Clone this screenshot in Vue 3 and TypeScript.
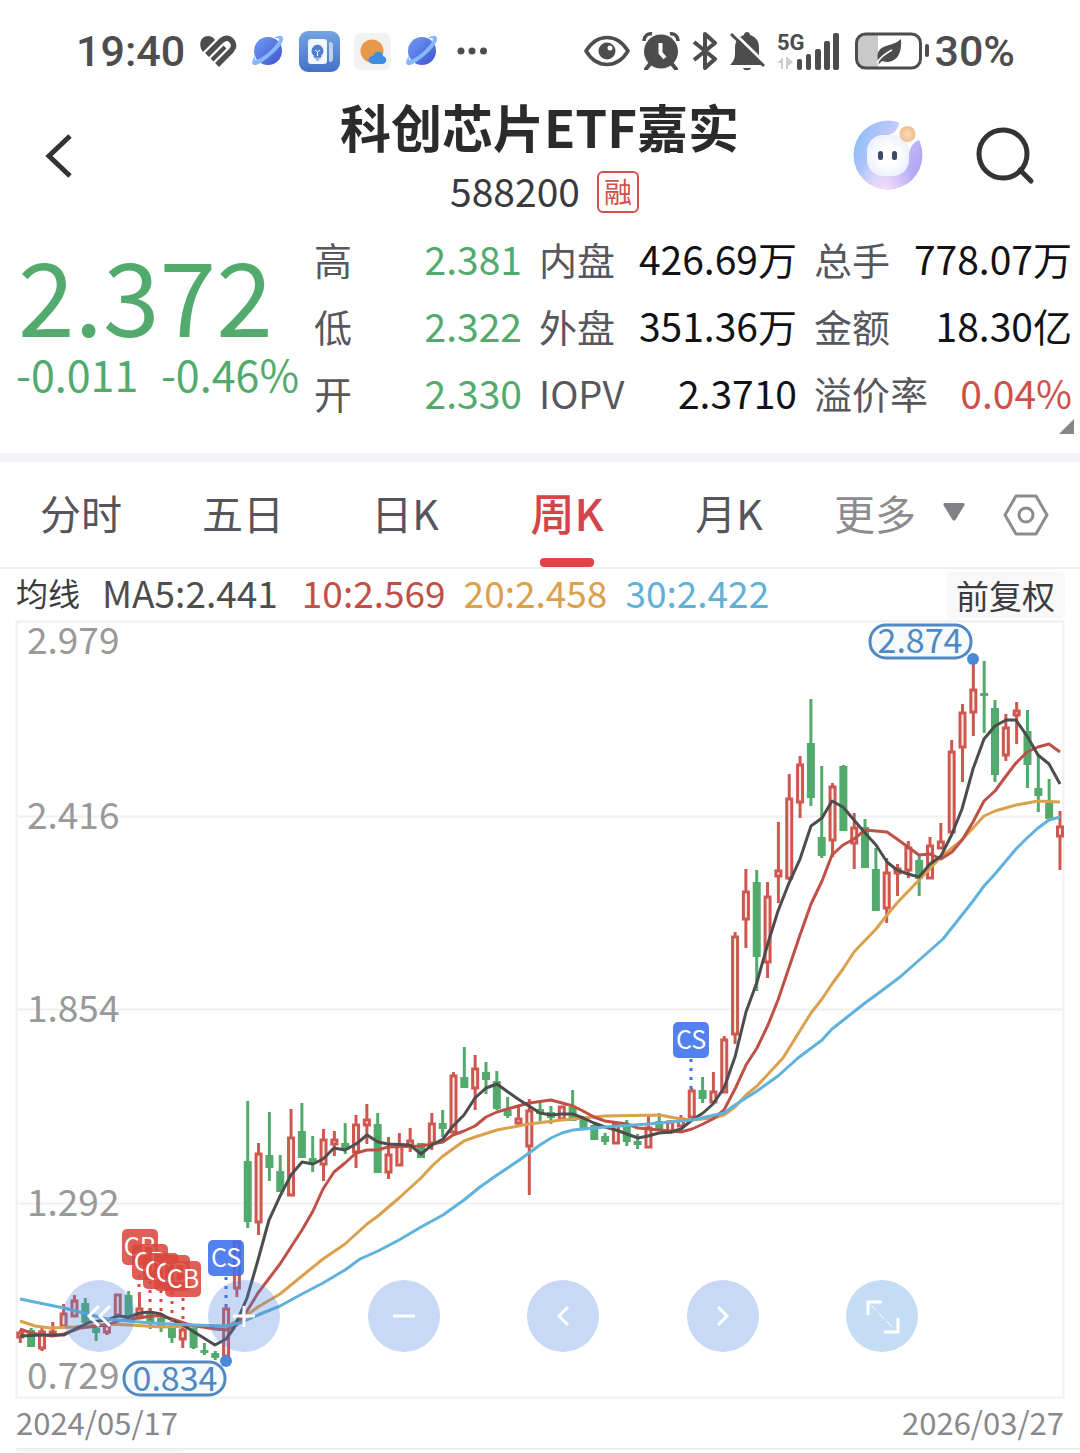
<script setup lang="ts">
type Candle = [kind: 'r' | 'g', high: number, top: number, bottom: number, low: number]

const rows = [
  [
    { label: '高', value: '2.381', tone: 'down' },
    { label: '低', value: '2.322', tone: 'down' },
    { label: '开', value: '2.330', tone: 'down' },
  ],
  [
    { label: '内盘', value: '426.69万', tone: '' },
    { label: '外盘', value: '351.36万', tone: '' },
    { label: 'IOPV', value: '2.3710', tone: '' },
  ],
  [
    { label: '总手', value: '778.07万', tone: '' },
    { label: '金额', value: '18.30亿', tone: '' },
    { label: '溢价率', value: '0.04%', tone: 'up' },
  ],
]

const tabs = ['分时', '五日', '日K', '周K', '月K']
const activeTab = '周K'

const averages = [
  { text: 'MA5:2.441', color: '#4d4d4d' },
  { text: '10:2.569', color: '#bf5048' },
  { text: '20:2.458', color: '#dba04c' },
  { text: '30:2.422', color: '#62b0d6' },
]

const axis = [
  { y: 654, text: '2.979' },
  { y: 829, text: '2.416' },
  { y: 1022, text: '1.854' },
  { y: 1216, text: '1.292' },
  { y: 1389, text: '0.729' },
]

const candles: Candle[] = [
  ['r', 1330, 1332, 1338, 1343], ['g', 1328, 1330, 1347, 1347], ['r', 1328, 1331, 1349, 1351],
  ['r', 1322, 1331, 1336, 1336], ['r', 1304, 1313, 1327, 1327], ['r', 1295, 1300, 1317, 1317],
  ['g', 1298, 1303, 1323, 1323], ['g', 1325, 1328, 1333, 1341], ['r', 1320, 1325, 1333, 1335],
  ['r', 1294, 1294, 1316, 1316], ['g', 1291, 1295, 1316, 1316], ['r', 1292, 1308, 1317, 1317],
  ['g', 1308, 1313, 1323, 1329], ['g', 1315, 1318, 1328, 1332], ['g', 1325, 1327, 1338, 1343],
  ['r', 1324, 1329, 1340, 1348], ['g', 1327, 1328, 1348, 1349], ['g', 1343, 1350, 1353, 1355],
  ['g', 1351, 1353, 1358, 1360], ['r', 1306, 1308, 1357, 1360], ['r', 1241, 1241, 1289, 1297],
  ['g', 1101, 1161, 1222, 1228], ['r', 1143, 1153, 1223, 1235], ['g', 1112, 1155, 1168, 1181],
  ['g', 1155, 1171, 1192, 1192], ['r', 1109, 1137, 1196, 1196], ['g', 1103, 1131, 1158, 1158],
  ['g', 1136, 1158, 1164, 1172], ['r', 1129, 1139, 1165, 1181], ['r', 1131, 1139, 1145, 1156],
  ['g', 1123, 1143, 1150, 1154], ['r', 1115, 1124, 1153, 1168], ['r', 1104, 1119, 1126, 1144],
  ['g', 1113, 1124, 1173, 1173], ['r', 1137, 1154, 1173, 1179], ['r', 1133, 1145, 1166, 1166],
  ['r', 1128, 1140, 1147, 1152], ['g', 1143, 1143, 1158, 1158], ['r', 1113, 1123, 1144, 1150],
  ['g', 1110, 1123, 1129, 1137], ['r', 1072, 1075, 1133, 1133], ['g', 1047, 1077, 1088, 1088],
  ['r', 1055, 1068, 1089, 1110], ['g', 1062, 1072, 1080, 1094], ['g', 1071, 1081, 1109, 1110],
  ['g', 1097, 1110, 1116, 1118], ['r', 1107, 1118, 1124, 1126], ['r', 1099, 1110, 1147, 1195],
  ['g', 1103, 1109, 1114, 1121], ['g', 1106, 1112, 1118, 1124], ['r', 1106, 1106, 1120, 1121],
  ['g', 1090, 1107, 1121, 1121], ['g', 1116, 1118, 1128, 1128], ['g', 1124, 1125, 1140, 1140],
  ['g', 1133, 1136, 1142, 1145], ['r', 1123, 1123, 1144, 1144], ['g', 1120, 1125, 1142, 1146],
  ['g', 1134, 1141, 1145, 1149], ['r', 1115, 1127, 1148, 1148], ['g', 1113, 1121, 1129, 1130],
  ['r', 1120, 1121, 1133, 1134], ['r', 1115, 1118, 1127, 1127], ['r', 1088, 1090, 1118, 1118],
  ['g', 1077, 1090, 1099, 1103], ['r', 1072, 1091, 1103, 1103], ['r', 1036, 1039, 1093, 1093],
  ['r', 932, 936, 1035, 1044], ['r', 869, 891, 920, 948], ['g', 870, 882, 957, 991],
  ['r', 882, 896, 963, 978], ['r', 822, 870, 877, 903], ['r', 774, 798, 879, 880],
  ['r', 756, 764, 803, 818], ['g', 699, 743, 798, 806], ['g', 766, 837, 856, 858],
  ['r', 783, 786, 841, 857], ['g', 765, 766, 831, 831], ['r', 813, 827, 844, 869],
  ['g', 819, 827, 868, 868], ['g', 848, 869, 911, 911], ['r', 858, 872, 909, 923],
  ['r', 864, 868, 874, 896], ['r', 841, 847, 871, 878], ['g', 855, 860, 879, 896],
  ['r', 837, 845, 879, 879], ['r', 823, 841, 849, 849], ['r', 740, 751, 833, 833],
  ['r', 704, 712, 748, 782], ['r', 660, 689, 713, 736], ['g', 661, 693, 696, 733],
  ['g', 700, 708, 775, 782], ['r', 714, 727, 756, 761], ['r', 702, 710, 716, 744],
  ['g', 710, 731, 765, 788], ['g', 754, 788, 796, 812], ['g', 779, 803, 819, 819],
  ['r', 811, 826, 837, 870],
]

const firstX = 20.3
const stepX = 10.83
const bars = candles.map(([kind, high, top, bottom, low], i) => ({
  key: i,
  x: firstX + i * stepX,
  color: kind === 'r' ? '#ce5750' : '#52ab6c',
  hollow: kind === 'r',
  high,
  top,
  bottom,
  low,
}))

const lines = [
  {
    color: '#dba04c',
    points:
      '20,1321 35,1326 50,1328 75,1327 107,1324 130,1325 161,1327 193,1326 226,1327 247,1315 258,1307 280,1294 302,1276 323,1259 345,1244 367,1224 378,1216 399,1198 421,1178 432,1166 443,1156 464,1141 475,1137 497,1130 529,1124 562,1120 605,1116 660,1115 670,1117 681,1119 692,1120 713,1118 724,1115 735,1107 746,1095 757,1086 783,1058 811,1013 822,999 832,984 843,969 854,952 876,929 887,915 897,903 919,880 941,857 962,840 973,828 984,816 995,811 1016,805 1027,803 1038,801 1060,802',
  },
  {
    color: '#bf5048',
    points:
      '20,1329 31,1333 42,1335 53,1336 64,1334 80,1328 107,1325 118,1321 129,1319 140,1318 150,1316 161,1316 172,1319 190,1325 215,1329 226,1330 237,1325 247,1311 258,1293 280,1264 302,1230 313,1211 323,1189 334,1172 345,1163 356,1153 367,1150 378,1150 388,1147 421,1146 443,1142 453,1135 464,1131 475,1126 486,1117 497,1112 518,1106 529,1103 551,1100 573,1106 583,1111 594,1117 605,1121 627,1124 638,1128 659,1130 681,1132 692,1129 703,1124 713,1119 724,1110 735,1089 746,1065 757,1048 768,1025 778,1000 800,935 811,904 822,881 832,855 843,845 854,839 865,830 887,832 897,839 908,847 919,855 930,854 941,859 952,852 962,840 973,822 984,801 995,791 1006,776 1016,763 1027,752 1038,747 1049,744 1060,752',
  },
  {
    color: '#4d4d4d',
    points:
      '20,1336 42,1335 64,1335 75,1329 90,1322 107,1320 118,1316 129,1317 140,1313 150,1312 161,1314 172,1320 183,1325 215,1345 226,1339 234,1328 247,1298 258,1260 269,1220 280,1196 291,1175 302,1162 313,1164 323,1159 334,1148 345,1150 356,1144 367,1135 378,1142 388,1144 410,1145 421,1154 432,1145 443,1139 453,1126 464,1115 475,1098 486,1088 497,1084 508,1092 518,1099 529,1106 540,1113 551,1115 562,1114 573,1114 583,1118 594,1123 605,1127 616,1130 627,1134 638,1138 648,1136 659,1133 670,1132 681,1129 692,1120 703,1113 713,1104 724,1088 735,1057 746,1012 757,982 768,943 778,911 789,883 800,859 811,826 822,818 832,801 843,807 854,820 865,833 876,845 887,862 897,870 908,874 919,877 930,864 941,856 952,834 962,809 973,769 984,739 995,726 1006,720 1016,720 1027,736 1038,755 1049,764 1060,784',
  },
  {
    color: '#5fb2da',
    points:
      '20,1299 64,1308 107,1319 150,1323 193,1325 226,1326 240,1323 258,1315 280,1306 302,1294 323,1283 345,1270 360,1259 378,1251 399,1240 421,1227 443,1215 464,1200 480,1187 497,1175 518,1161 529,1153 540,1145 551,1138 562,1133 573,1130 605,1127 648,1124 692,1120 724,1113 735,1105 746,1098 757,1091 778,1076 798,1058 822,1040 832,1029 865,1003 876,995 900,977 943,939 962,915 973,901 984,886 995,874 1016,849 1027,838 1038,828 1049,820 1060,817',
  },
]

const markers = [
  { text: 'CB', x: 122, y: 1229, to: 1292, lineX: 139, color: '#db483e' },
  { text: 'CB', x: 132, y: 1244, to: 1322, lineX: 150, color: '#db483e' },
  { text: 'CB', x: 143, y: 1253, to: 1316, lineX: 161, color: '#db483e' },
  { text: 'CB', x: 154, y: 1255, to: 1322, lineX: 172, color: '#db483e' },
  { text: 'CB', x: 165, y: 1261, to: 1324, lineX: 183, color: '#db483e' },
  { text: 'CS', x: 208, y: 1240, to: 1306, lineX: 226, color: '#3b70ee' },
  { text: 'CS', x: 673, y: 1022, to: 1090, lineX: 691, color: '#3b70ee' },
]

const controls = [
  { name: '最早', d: 'M36 26 26 36l10 10M47 26 37 36l10 10' },
  { name: '放大', d: 'M25 36h22M36 26v21' },
  { name: '缩小', d: 'M25 36h22' },
  { name: '向左', d: 'M41 27l-9 9 9 9' },
  { name: '向右', d: 'M31 27l9 9-9 9' },
  { name: '全屏', d: 'M22 35V22h14M52 38v14H38' },
]
</script>

<template>
  <main class="app">
    <div class="status">
      <div class="status-left">
        <span class="clock">19:40</span>
        <svg width="38" height="32" viewBox="0 0 38 32" aria-hidden="true">
          <g fill="none" stroke="#4d4d4d" stroke-width="5.500">
            <path d="M8 20 20 8C24 3 29 2 32 5s4 7 0 11L18 30" />
            <path d="M13 25 26 12" stroke-width="4" />
          </g>
          <path d="M4 17C-1 11 1 1 9 1c3 0 5 1 7 4z" fill="#4d4d4d" />
        </svg>
        <svg width="34" height="34" viewBox="0 0 34 34" aria-hidden="true">
          <defs>
            <linearGradient id="planet" x1="0" y1="0" x2="1" y2="1">
              <stop offset="0" stop-color="#6f9ef5" /><stop offset="1" stop-color="#4052d0" />
            </linearGradient>
          </defs>
          <circle cx="17" cy="17" r="14" fill="url(#planet)" />
          <path d="M23 4c5-3 9-3 9 1 0 5-7 12-13 17S6 32 3 31c-3-1-2-5 1-9 0 2 0 4 1 4 4-1 10-5 15-10s8-9 8-11c0-1-2-1-5-1z" fill="#86b8fa" />
        </svg>
        <svg width="41" height="41" viewBox="0 0 41 41" aria-hidden="true">
          <defs>
            <linearGradient id="tile" x1="0" y1="0" x2="0" y2="1">
              <stop offset="0" stop-color="#74a4e2" /><stop offset="1" stop-color="#4571c6" />
            </linearGradient>
          </defs>
          <rect width="41" height="41" rx="9" fill="url(#tile)" />
          <path d="M30 11c3 0 4 1 4 3v14c0 2-1 3-4 3z" fill="#bdd2f3" />
          <rect x="9" y="8" width="19" height="25" rx="3" fill="#f3f6fc" />
          <path d="M18.500 14a6 6 0 0 0-3.500 10.500V26h7v-1.500A6 6 0 0 0 18.500 14zM15.500 27h6M17 29h3" fill="#4d7fcd" stroke="#4d7fcd" />
          <path d="M16 19l2.500 2 2.500-2M18.500 21v4" stroke="#fff" fill="none" />
        </svg>
        <svg width="37" height="37" viewBox="0 0 37 37" aria-hidden="true">
          <rect width="37" height="37" rx="7" fill="#f1f3f3" />
          <circle cx="18" cy="18" r="11.500" fill="#e6984b" />
          <path d="M19 31c-6-.5-6-8 0-8 2-6 10-5 10 0 5 1 4 8-1 8z" fill="#3d8de2" />
        </svg>
        <svg width="34" height="34" viewBox="0 0 34 34" aria-hidden="true">
          <circle cx="17" cy="17" r="14" fill="url(#planet)" />
          <path d="M23 4c5-3 9-3 9 1 0 5-7 12-13 17S6 32 3 31c-3-1-2-5 1-9 0 2 0 4 1 4 4-1 10-5 15-10s8-9 8-11c0-1-2-1-5-1z" fill="#86b8fa" />
        </svg>
        <svg width="40" height="10" viewBox="0 0 40 10" fill="#4d4d4d" aria-hidden="true">
          <circle cx="8" cy="5" r="3.500" /><circle cx="19" cy="5" r="3.500" /><circle cx="30.500" cy="5" r="3.500" />
        </svg>
      </div>
      <div class="status-right">
        <svg width="46" height="32" viewBox="0 0 46 32" aria-hidden="true">
          <path d="M2 16C13-2 33-2 44 16 33 34 13 34 2 16z" fill="none" stroke="#4d4d4d" stroke-width="3.500" />
          <circle cx="23" cy="16" r="8.500" fill="#4d4d4d" /><circle cx="26" cy="13" r="2.500" fill="#fff" />
        </svg>
        <svg width="38" height="38" viewBox="0 0 38 38" aria-hidden="true">
          <circle cx="19" cy="19.500" r="17" fill="#4d4d4d" />
          <path d="M8 32l-4 5M30 32l4 5" stroke="#4d4d4d" stroke-width="4" stroke-linecap="round" />
          <path d="M1 10C1 4 6 0 11 2M37 10C37 4 32 0 27 2" stroke="#fff" stroke-width="7" fill="none" />
          <path d="M2 9C2 4 6 1 10 2M36 9C36 4 32 1 28 2" stroke="#4d4d4d" stroke-width="3.500" fill="none" />
          <path d="M18.500 11v10l4.500 5" stroke="#fff" stroke-width="4" fill="none" />
        </svg>
        <svg width="26" height="38" viewBox="0 0 26 38" fill="none" stroke="#4d4d4d" stroke-width="4" stroke-linejoin="round" aria-hidden="true">
          <path d="M2 10l21 17-10 9V2l10 9L2 28" />
        </svg>
        <svg width="35" height="40" viewBox="0 0 35 40" aria-hidden="true">
          <path d="M0 34c3-3 5-6 5-11V17C5 9 9 6 14 4c0-4 6-4 6 0 6 2 9 6 9 13v6c0 5 1 8 3 11z" fill="#4d4d4d" />
          <path d="M13 37h8c-1 3-7 3-8 0z" fill="#4d4d4d" />
          <path d="M3 1 36 33" stroke="#fff" stroke-width="3" />
          <path d="M1 3 34 35" stroke="#4d4d4d" stroke-width="3" />
        </svg>
        <svg width="66" height="40" viewBox="0 0 66 40" aria-hidden="true">
          <text x="0" y="19" class="five-g">5G</text>
          <path d="M0 32l6-6v12H4v-6zM9 26v12h2v-3l5-4-5-4v-1z" fill="#ccc" />
          <g fill="#4d4d4d">
            <rect x="20" y="28" width="5" height="11" rx="2" /><rect x="29" y="23" width="5" height="16" rx="2" />
            <rect x="38" y="18" width="6" height="21" rx="2" /><rect x="47" y="10" width="6" height="29" rx="2" />
            <rect x="56" y="2" width="6" height="37" rx="2" />
          </g>
        </svg>
        <div class="power">
          <svg width="75" height="38" viewBox="0 0 75 38" aria-hidden="true">
            <path d="M10 2h13v34H10c-5 0-8-3-8-8V10c0-5 3-8 8-8z" fill="#c9c9c9" />
            <rect x="1.500" y="2" width="64" height="34" rx="9" fill="none" stroke="#4d4d4d" stroke-width="3" />
            <rect x="70" y="12" width="4" height="13" rx="2" fill="#4d4d4d" />
            <path d="M46 7c1 13-3 22-13 23-2 0-4-.5-6-1l-3 3c-3-9-2-15 7-18 6-2 11-3 15-7z" fill="#4d4d4d" />
            <path d="M22 31c4-7 9-10 15-13" stroke="#fff" stroke-width="1.500" fill="none" />
          </svg>
          <span class="clock">30%</span>
        </div>
      </div>
    </div>

    <header class="header">
      <button class="icon-button" aria-label="返回">
        <svg width="30" height="48" viewBox="0 0 30 48"><path d="M26 4 5 24l21 20" fill="none" stroke="#333" stroke-width="5" /></svg>
      </button>
      <div class="heading">
        <h1>科创芯片ETF嘉实</h1>
        <p><span>588200</span><b>融</b></p>
      </div>
      <div class="actions">
        <button class="icon-button" aria-label="助手">
          <svg width="70" height="70" viewBox="0 0 70 70">
            <defs>
              <linearGradient id="ring" x1="0" y1="0.300" x2="1" y2="0.700">
                <stop offset="0" stop-color="#8dbdf8" /><stop offset="0.500" stop-color="#c9ccfb" /><stop offset="1" stop-color="#b3a1f3" />
              </linearGradient>
              <radialGradient id="glow" cx="0.450" cy="1" r="0.450">
                <stop offset="0" stop-color="#f4dcf8" /><stop offset="1" stop-color="#f4dcf8" stop-opacity="0" />
              </radialGradient>
              <radialGradient id="face"><stop offset="0.500" stop-color="#fff" /><stop offset="1" stop-color="#eef2ff" /></radialGradient>
              <radialGradient id="orb"><stop offset="0" stop-color="#fbdcbf" /><stop offset="1" stop-color="#f1bd8d" /></radialGradient>
            </defs>
            <circle cx="35" cy="35" r="34.500" fill="url(#ring)" />
            <circle cx="35" cy="35" r="34.500" fill="url(#glow)" />
            <path d="M47 0 46 4c-2 7-6 10-11 11l21 21c0-7 3-13 10-16l6-2V0z" fill="#fff" />
            <rect x="14" y="15" width="42" height="41" rx="16" fill="url(#face)" />
            <circle cx="54.500" cy="14" r="8" fill="url(#orb)" />
            <rect x="25" y="31" width="5" height="9" rx="2.500" fill="#3d4a66" /><rect x="39" y="31" width="5" height="9" rx="2.500" fill="#3d4a66" />
          </svg>
        </button>
        <button class="icon-button" aria-label="搜索">
          <svg width="60" height="60" viewBox="0 0 60 60" fill="none" stroke="#333" stroke-width="5">
            <circle cx="28" cy="28" r="24" /><path d="M45 44l11 11" stroke-linecap="round" />
          </svg>
        </button>
      </div>
    </header>

    <section class="quote">
      <div class="price down">
        <strong>2.372</strong>
        <p><span>-0.011</span><span>-0.46%</span></p>
      </div>
      <div class="stats">
        <dl v-for="(column, c) in rows" :key="c">
          <div v-for="item in column" :key="item.label">
            <dt>{{ item.label }}</dt>
            <dd :class="item.tone">{{ item.value }}</dd>
          </div>
        </dl>
      </div>
      <span class="corner"></span>
    </section>

    <nav class="tabs">
      <button v-for="tab in tabs" :key="tab" class="tab" :class="{ active: tab === activeTab }">{{ tab }}</button>
      <button class="more">
        更多
        <svg width="24" height="20" viewBox="0 0 24 20"><path d="M3 1h18c2 0 2 2 1 3L14 17c-1 2-3 2-4 0L2 4C1 3 1 1 3 1z" fill="#808086" /></svg>
      </button>
      <button class="settings" aria-label="设置">
        <svg width="46" height="42" viewBox="0 0 46 42" fill="none" stroke="#8c8c90" stroke-width="3">
          <path d="M13 2h20l11 19-11 19H13L2 21z" stroke-linejoin="round" /><circle cx="23" cy="21" r="7" />
        </svg>
      </button>
    </nav>

    <div class="legend">
      <span class="legend-title">均线</span>
      <span v-for="item in averages" :key="item.text" class="average" :style="{ color: item.color }">{{ item.text }}</span>
      <button>前复权</button>
    </div>

    <section class="chart">
      <svg class="plot" viewBox="15 620 1050 779" role="img" aria-label="周K线图">
        <path d="M16.500 621.500h1047v776h-1047zM16 816.500h1048M16 1009.500h1048M16 1203.500h1048" fill="none" stroke="#f0f0f0" stroke-width="2" />
        <g v-for="bar in bars" :key="bar.key" :stroke="bar.color">
          <path :d="`M${bar.x} ${bar.high}V${bar.top}M${bar.x} ${bar.bottom}V${bar.low}`" stroke-width="3" />
          <rect
            v-if="bar.hollow"
            :x="bar.x - 2.500"
            :y="bar.top + 1"
            width="5"
            :height="bar.bottom - bar.top - 2"
            fill="#fdeeec"
            stroke-width="3"
          />
          <rect v-else :x="bar.x - 4" :y="bar.top" width="8" :height="bar.bottom - bar.top" :fill="bar.color" stroke="none" />
        </g>
        <polyline
          v-for="line in lines"
          :key="line.color"
          :points="line.points"
          :stroke="line.color"
          fill="none"
          stroke-width="3"
          stroke-linejoin="round"
        />
        <text v-for="tick in axis" :key="tick.text" x="27" :y="tick.y" class="tick">{{ tick.text }}</text>
        <g v-for="(m, i) in markers" :key="i">
          <path :d="`M${m.lineX} ${m.y + 37}V${m.to}`" :stroke="m.color" stroke-width="3" stroke-dasharray="3 6" />
          <rect :x="m.x" :y="m.y" width="36" height="36" rx="5" :fill="m.color" fill-opacity="0.880" />
          <text :x="m.x + 18" :y="m.y + 27" class="mark">{{ m.text }}</text>
        </g>
        <g fill="#f6fafd" stroke="#5088c2" stroke-width="3">
          <rect x="870" y="625" width="101" height="33" rx="16" />
          <rect x="124" y="1362" width="101" height="33" rx="16" />
        </g>
        <g class="bubble"><text x="920" y="653">2.874</text><text x="175" y="1391">0.834</text></g>
        <g fill="#4a88d8"><circle cx="973" cy="659" r="6" /><circle cx="226" cy="1361" r="6" /></g>
      </svg>
      <div class="controls">
        <button v-for="control in controls" :key="control.name" :aria-label="control.name">
          <svg width="72" height="72" viewBox="0 0 72 72" fill="none" stroke="#fff" stroke-width="3">
            <path :d="control.d" />
            <path v-if="control.name === '全屏'" d="M25 25l22 23" stroke-width="1" stroke-dasharray="8 3" />
          </svg>
        </button>
      </div>
    </section>

    <div class="dates"><time>2024/05/17</time><time>2026/03/27</time></div>
    <div class="next-panel"><span></span></div>
  </main>
</template>

<style>
body {
  background: #fff;
}
</style>

<style scoped>
.app {
  overflow: hidden;
  background: #fff;
  color: #111216;
  font-family: 'Noto Sans CJK SC', 'Noto Sans', sans-serif;
}
h1, p, dl, dd {
  margin: 0;
}
button {
  padding: 0;
  border: 0;
  background: none;
  color: inherit;
  font: inherit;
}
svg {
  display: block;
  flex: none;
}
.status {
  display: flex;
  justify-content: space-between;
  align-items: center;
  height: 102px;
  padding: 0 65px 0 76px;
}
.status-left, .status-right, .power {
  display: flex;
  align-items: center;
}
.status-left {
  gap: 14px;
}
.status-right {
  gap: 12px;
}
.power {
  gap: 4px;
}
.clock {
  color: #4d4d4d;
  font: 500 43px/50px Roboto, sans-serif;
}
.five-g {
  fill: #4d4d4d;
  font: 700 22px Roboto, sans-serif;
}
.header {
  display: grid;
  grid-template-columns: 1fr auto 1fr;
  height: 123px;
  padding: 0 45px 0 44px;
}
.header > .icon-button {
  justify-self: start;
  align-self: start;
  margin-top: 30px;
}
.heading {
  text-align: center;
}
.heading h1 {
  color: #2b2b2e;
  font-size: 51px;
  line-height: 48px;
  font-weight: 700;
}
.heading p {
  display: flex;
  justify-content: center;
  align-items: center;
  gap: 17px;
  margin-top: 16px;
  padding-left: 10px;
  color: #3a3a3e;
  font-size: 39px;
  line-height: 48px;
}
.heading p span {
  padding-bottom: 4px;
}
.heading b {
  box-sizing: border-box;
  width: 42px;
  height: 42px;
  border: 2px solid #cf504b;
  border-radius: 6px;
  color: #cf504b;
  font-size: 28px;
  line-height: 36px;
  font-weight: 400;
}
.actions {
  display: flex;
  justify-content: flex-end;
  align-items: flex-start;
  gap: 52px;
  padding-top: 18px;
}
.actions .icon-button + .icon-button {
  padding-top: 6px;
}
.quote {
  position: relative;
  display: flex;
  height: 228px;
  padding: 0 8px 0 16px;
  border-bottom: 9px solid #f3f4f8;
}
.down {
  color: #52ab6c;
}
.up {
  color: #cf504b;
}
.price {
  flex: 0 0 298px;
}
.price strong {
  display: block;
  padding: 13px 0 0 2px;
  font-size: 102px;
  line-height: 110px;
  font-weight: 400;
}
.price p {
  display: flex;
  justify-content: space-between;
  padding-right: 15px;
  font-size: 43px;
  line-height: 50px;
}
.stats {
  flex: 1;
  display: grid;
  grid-template-columns: 208fr 258fr 258fr;
  gap: 17px;
}
.stats dl > div {
  display: flex;
  justify-content: space-between;
  line-height: 67px;
  white-space: nowrap;
}
.stats dt {
  color: #57575d;
  font-size: 38px;
}
.stats dd {
  font-size: 39px;
}
.corner {
  position: absolute;
  right: 6px;
  bottom: 19px;
  width: 15px;
  height: 15px;
  background: #87878b;
  clip-path: polygon(100% 0, 100% 100%, 0 100%);
}
.tabs {
  display: flex;
  height: 105px;
  border-bottom: 2px solid #ededed;
  color: #55555b;
  font-size: 41px;
}
.tab {
  position: relative;
  flex: 0 0 15%;
  padding-bottom: 6px;
}
.tab.active {
  color: #d4454a;
  font-size: 44px;
  font-weight: 500;
}
.tab.active::after {
  content: '';
  position: absolute;
  left: 50%;
  bottom: 0;
  width: 54px;
  height: 9px;
  margin-left: -27px;
  border-radius: 4px;
  background: #e2434a;
}
.more {
  display: flex;
  align-items: center;
  gap: 26px;
  padding: 0 0 5px 24px;
  color: #8c8c90;
}
.settings {
  margin-left: auto;
  padding-right: 31px;
}
.legend {
  display: flex;
  align-items: center;
  gap: 18px;
  height: 51px;
  padding: 0 15px 0 16px;
  font-size: 37px;
  line-height: 46px;
}
.legend span {
  padding-bottom: 6px;
}
.legend .legend-title {
  margin-right: 4px;
  color: #3c3c40;
  font-size: 32px;
}
.legend-title + .average {
  margin-right: 6px;
}
.legend button {
  width: 119px;
  height: 46px;
  margin-left: auto;
  border-radius: 6px;
  background: #f8f8f9;
  color: #3c3c40;
  font-size: 33px;
  line-height: 44px;
}
.chart {
  position: relative;
  padding: 0 15px;
}
.plot {
  width: 100%;
  height: auto;
  overflow: visible;
}
.tick {
  fill: #999;
  font-size: 37px;
}
.mark {
  fill: #fff;
  font-size: 25px;
  text-anchor: middle;
}
.bubble {
  fill: #5088c2;
  font-size: 34px;
  text-anchor: middle;
}
.controls {
  position: absolute;
  left: 63px;
  right: 162px;
  bottom: 47px;
  display: flex;
  justify-content: space-between;
}
.controls button {
  width: 72px;
  height: 72px;
  border-radius: 50%;
  background: rgba(72, 128, 224, 0.3);
}
.controls button:first-child {
  margin-right: -14px;
}
.controls button:last-child {
  background: rgba(64, 142, 218, 0.3);
}
.dates {
  display: flex;
  justify-content: space-between;
  padding: 0 16px;
  color: #88888c;
  font-size: 31px;
  line-height: 45px;
}
.next-panel {
  margin: 4px 0 0 16px;
  border-top: 2px solid #eeeeef;
}
.next-panel span {
  display: block;
  width: 168px;
  height: 3px;
  border-radius: 4px 4px 0 0;
  background: #f6f6f7;
}
</style>
